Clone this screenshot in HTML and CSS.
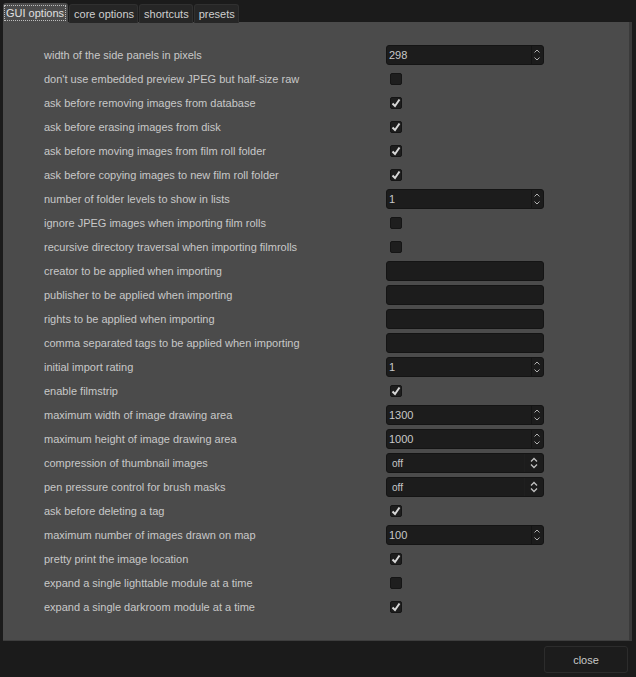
FILE: index.html
```html
<!DOCTYPE html>
<html>
<head>
<meta charset="utf-8">
<link rel="stylesheet" href="styles.css">
</head>
<body>
<div class="tabs">
  <div class="tab active"><span class="focus">GUI options</span></div>
  <div class="tab">core options</div>
  <div class="tab">shortcuts</div>
  <div class="tab">presets</div>
</div>
<div class="panel">
  <div class="grid">
    <div class="label">width of the side panels in pixels</div>
    <div class="ctl"><div class="spin"><span class="val">298</span><span class="arrows"><svg width="8" height="16" viewBox="0 0 8 16"><path d="M1.5 5.5 L4 3 L6.5 5.5 M1.5 10.5 L4 13 L6.5 10.5" fill="none" stroke="#b0b0b0" stroke-width="1"/></svg></span></div></div>

    <div class="label">don't use embedded preview JPEG but half-size raw</div>
    <div class="ctl"><span class="cb"></span></div>

    <div class="label">ask before removing images from database</div>
    <div class="ctl"><span class="cb on"><svg width="12" height="12" viewBox="0 0 12 12"><path d="M2.5 6.5 L5 9 L9.5 2.5" fill="none" stroke="#d8d8d8" stroke-width="2"/></svg></span></div>

    <div class="label">ask before erasing images from disk</div>
    <div class="ctl"><span class="cb on"><svg width="12" height="12" viewBox="0 0 12 12"><path d="M2.5 6.5 L5 9 L9.5 2.5" fill="none" stroke="#d8d8d8" stroke-width="2"/></svg></span></div>

    <div class="label">ask before moving images from film roll folder</div>
    <div class="ctl"><span class="cb on"><svg width="12" height="12" viewBox="0 0 12 12"><path d="M2.5 6.5 L5 9 L9.5 2.5" fill="none" stroke="#d8d8d8" stroke-width="2"/></svg></span></div>

    <div class="label">ask before copying images to new film roll folder</div>
    <div class="ctl"><span class="cb on"><svg width="12" height="12" viewBox="0 0 12 12"><path d="M2.5 6.5 L5 9 L9.5 2.5" fill="none" stroke="#d8d8d8" stroke-width="2"/></svg></span></div>

    <div class="label">number of folder levels to show in lists</div>
    <div class="ctl"><div class="spin"><span class="val">1</span><span class="arrows"><svg width="8" height="16" viewBox="0 0 8 16"><path d="M1.5 5.5 L4 3 L6.5 5.5 M1.5 10.5 L4 13 L6.5 10.5" fill="none" stroke="#b0b0b0" stroke-width="1"/></svg></span></div></div>

    <div class="label">ignore JPEG images when importing film rolls</div>
    <div class="ctl"><span class="cb"></span></div>

    <div class="label">recursive directory traversal when importing filmrolls</div>
    <div class="ctl"><span class="cb"></span></div>

    <div class="label">creator to be applied when importing</div>
    <div class="ctl"><div class="entry"></div></div>

    <div class="label">publisher to be applied when importing</div>
    <div class="ctl"><div class="entry"></div></div>

    <div class="label">rights to be applied when importing</div>
    <div class="ctl"><div class="entry"></div></div>

    <div class="label">comma separated tags to be applied when importing</div>
    <div class="ctl"><div class="entry"></div></div>

    <div class="label">initial import rating</div>
    <div class="ctl"><div class="spin"><span class="val">1</span><span class="arrows"><svg width="8" height="16" viewBox="0 0 8 16"><path d="M1.5 5.5 L4 3 L6.5 5.5 M1.5 10.5 L4 13 L6.5 10.5" fill="none" stroke="#b0b0b0" stroke-width="1"/></svg></span></div></div>

    <div class="label">enable filmstrip</div>
    <div class="ctl"><span class="cb on"><svg width="12" height="12" viewBox="0 0 12 12"><path d="M2.5 6.5 L5 9 L9.5 2.5" fill="none" stroke="#d8d8d8" stroke-width="2"/></svg></span></div>

    <div class="label">maximum width of image drawing area</div>
    <div class="ctl"><div class="spin"><span class="val">1300</span><span class="arrows"><svg width="8" height="16" viewBox="0 0 8 16"><path d="M1.5 5.5 L4 3 L6.5 5.5 M1.5 10.5 L4 13 L6.5 10.5" fill="none" stroke="#b0b0b0" stroke-width="1"/></svg></span></div></div>

    <div class="label">maximum height of image drawing area</div>
    <div class="ctl"><div class="spin"><span class="val">1000</span><span class="arrows"><svg width="8" height="16" viewBox="0 0 8 16"><path d="M1.5 5.5 L4 3 L6.5 5.5 M1.5 10.5 L4 13 L6.5 10.5" fill="none" stroke="#b0b0b0" stroke-width="1"/></svg></span></div></div>

    <div class="label">compression of thumbnail images</div>
    <div class="ctl"><div class="combo"><span class="val small">off</span><span class="carrows"><svg width="10" height="16" viewBox="0 0 10 16"><path d="M2 6.5 L5 3.5 L8 6.5 M2 9.5 L5 12.5 L8 9.5" fill="none" stroke="#c0c0c0" stroke-width="1.3"/></svg></span></div></div>

    <div class="label">pen pressure control for brush masks</div>
    <div class="ctl"><div class="combo"><span class="val small">off</span><span class="carrows"><svg width="10" height="16" viewBox="0 0 10 16"><path d="M2 6.5 L5 3.5 L8 6.5 M2 9.5 L5 12.5 L8 9.5" fill="none" stroke="#c0c0c0" stroke-width="1.3"/></svg></span></div></div>

    <div class="label">ask before deleting a tag</div>
    <div class="ctl"><span class="cb on"><svg width="12" height="12" viewBox="0 0 12 12"><path d="M2.5 6.5 L5 9 L9.5 2.5" fill="none" stroke="#d8d8d8" stroke-width="2"/></svg></span></div>

    <div class="label">maximum number of images drawn on map</div>
    <div class="ctl"><div class="spin"><span class="val">100</span><span class="arrows"><svg width="8" height="16" viewBox="0 0 8 16"><path d="M1.5 5.5 L4 3 L6.5 5.5 M1.5 10.5 L4 13 L6.5 10.5" fill="none" stroke="#b0b0b0" stroke-width="1"/></svg></span></div></div>

    <div class="label">pretty print the image location</div>
    <div class="ctl"><span class="cb on"><svg width="12" height="12" viewBox="0 0 12 12"><path d="M2.5 6.5 L5 9 L9.5 2.5" fill="none" stroke="#d8d8d8" stroke-width="2"/></svg></span></div>

    <div class="label">expand a single lighttable module at a time</div>
    <div class="ctl"><span class="cb"></span></div>

    <div class="label">expand a single darkroom module at a time</div>
    <div class="ctl"><span class="cb on"><svg width="12" height="12" viewBox="0 0 12 12"><path d="M2.5 6.5 L5 9 L9.5 2.5" fill="none" stroke="#d8d8d8" stroke-width="2"/></svg></span></div>
  </div>
</div>
<div class="footer">
  <button class="close">close</button>
</div>
</body>
</html>
```
FILE: styles.css
```css
html, body {
  margin: 0;
  padding: 0;
  background: #1b1b1b;
  width: 636px;
  height: 677px;
  overflow: hidden;
  font-family: "Liberation Sans", Arial, sans-serif;
  font-size: 11px;
  color: #c8c8c8;
}
.tabs {
  display: flex;
  padding: 3px 0 0 3px;
  height: 19px;
  gap: 1px;
}
.tab {
  background: #262626;
  border: 1px solid #303030;
  border-bottom: none;
  border-radius: 3px 3px 0 0;
  padding: 0 3px 0 4px;
  height: 18px;
  margin-top: 1px;
  display: flex;
  align-items: center;
  font-size: 11px;
  color: #cfcfcf;
}
.tab.active {
  background: #4b4b4b;
  border: none;
  height: 19px;
  margin-top: 0;
  padding: 0 2px 0 1px;
  color: #e0e0e0;
}
.focus {
  border: 1px dotted #bdbdbd;
  padding: 1px 1px;
  line-height: 12px;
}
.panel {
  margin: 0 4px 0 3px;
  height: 619px;
  background: #4b4b4b;
  border-right: 3px solid #3a3a3a;
  border-bottom: 1px solid #3e3e3e;
  box-sizing: border-box;
  padding-top: 21px;
}
.grid {
  display: grid;
  grid-template-columns: 342px 158px;
  grid-auto-rows: 24px;
  padding-left: 41px;
}
.label {
  display: flex;
  align-items: center;
  color: #c8c8c8;
  white-space: nowrap;
}
.ctl {
  display: flex;
  align-items: center;
}
.cb {
  width: 10px;
  height: 10px;
  margin-left: 4px;
  background: #1e1e1e;
  border: 1px solid #151515;
  border-radius: 2px;
  position: relative;
}
.cb svg {
  position: absolute;
  left: -1px;
  top: -1px;
}
.spin, .combo, .entry {
  width: 158px;
  height: 20px;
  box-sizing: border-box;
  background: #1c1c1c;
  border: 1px solid #141414;
  border-radius: 3px;
  display: flex;
  align-items: center;
}
.val {
  flex: 1;
  padding-left: 2px;
  color: #c8c8c8;
  font-size: 11px;
}
.val.small {
  font-size: 10px;
  padding-left: 5px;
}
.arrows {
  width: 10px;
  height: 18px;
  border-left: 1px solid #141414;
  display: flex;
  align-items: center;
  justify-content: center;
  margin-right: 1px;
}
.carrows {
  width: 18px;
  height: 18px;
  border-left: 1px solid #1f1f1f;
  display: flex;
  align-items: center;
  justify-content: center;
}
.footer {
  display: flex;
  justify-content: flex-end;
  padding: 5px 8px 0 0;
}
.close {
  width: 84px;
  height: 27px;
  background: #1c1c1c;
  border: 1px solid #2c2c2c;
  border-radius: 3px;
  color: #c8c8c8;
  font-family: "Liberation Sans", Arial, sans-serif;
  font-size: 11px;
  padding: 0;
}
```
